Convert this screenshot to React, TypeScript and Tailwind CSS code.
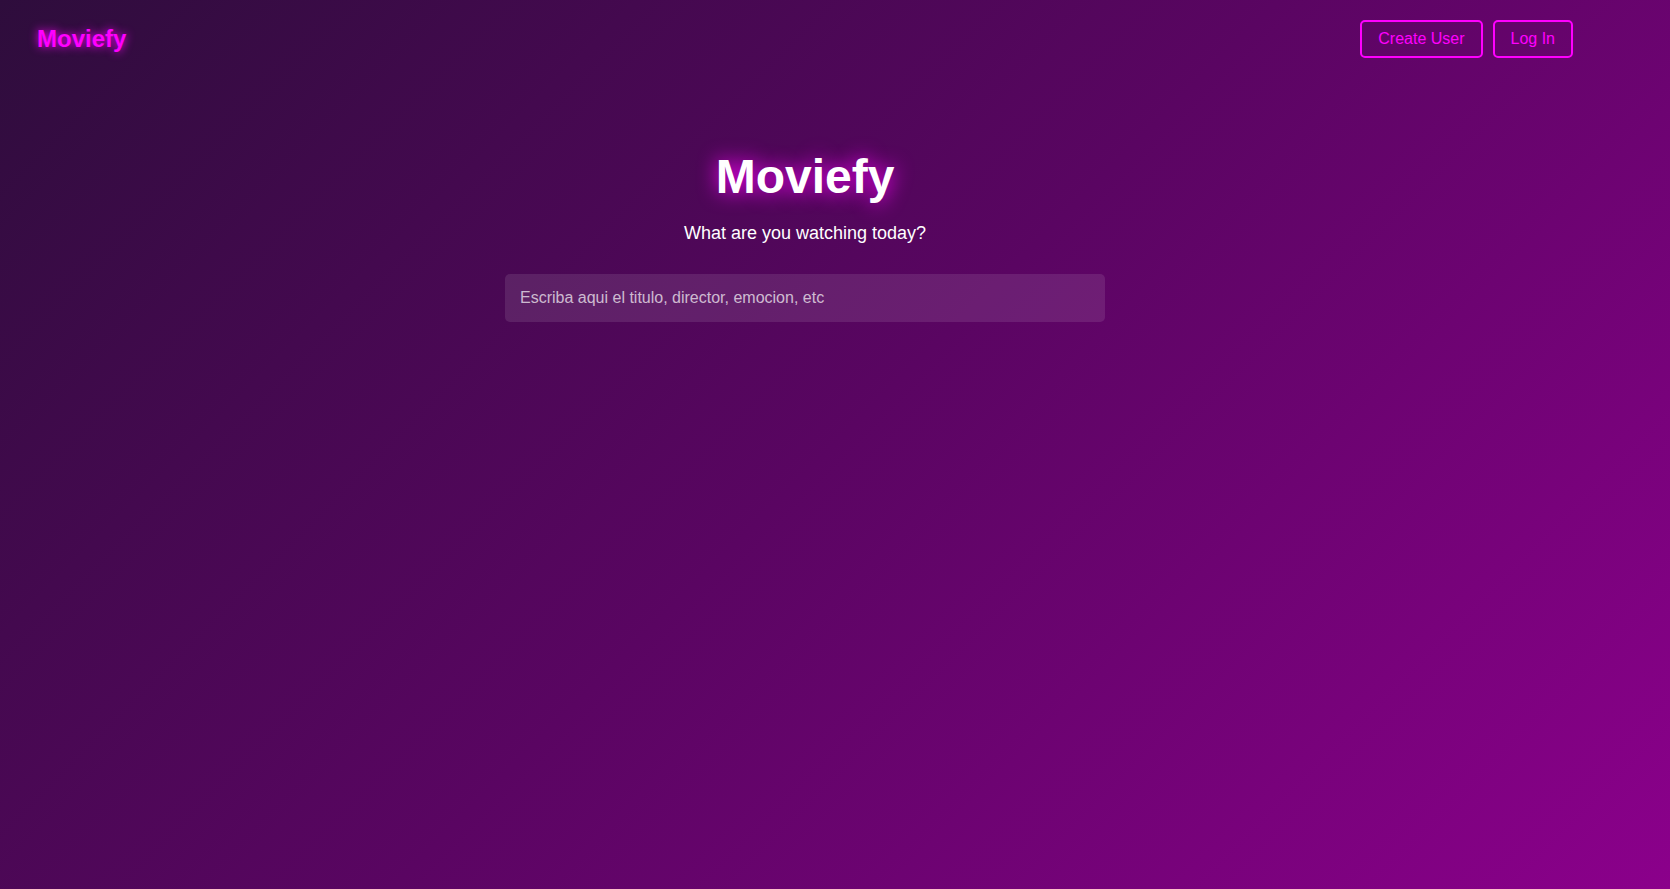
export default function App() {
  return (
    <div className="min-h-screen bg-[linear-gradient(135deg,#2e0d3c,#5a0562,#8b008b)] pr-15 font-['Liberation_Sans',Arial,sans-serif] text-white">
      <header className="flex items-center justify-between px-[37px] py-5">
        <a
          href="#"
          className="text-2xl leading-7 font-bold text-[#ff00ff] [text-shadow:0_0_10px_#ff00ff]"
        >
          Moviefy
        </a>
        <nav className="flex gap-[10px]">
          <button
            type="button"
            className="rounded-[5px] border-2 border-[#ff00ff] px-4 py-2 text-base leading-[18px] text-[#ff00ff]"
          >
            Create User
          </button>
          <button
            type="button"
            className="rounded-[5px] border-2 border-[#ff00ff] px-4 py-2 text-base leading-[18px] text-[#ff00ff]"
          >
            Log In
          </button>
        </nav>
      </header>
      <main className="flex flex-col items-center px-5 pt-[73px]">
        <h1 className="text-5xl leading-13 font-bold [text-shadow:0_0_20px_#ff00ff]">
          Moviefy
        </h1>
        <p className="mt-5 text-lg leading-5">What are you watching today?</p>
        <input
          type="text"
          aria-label="Search movies"
          placeholder="Escriba aqui el titulo, director, emocion, etc"
          className="mt-[31px] h-12 w-full max-w-[600px] rounded-[5px] bg-white/10 px-[15px] text-base text-white outline-none placeholder:text-white/70"
        />
      </main>
    </div>
  );
}
